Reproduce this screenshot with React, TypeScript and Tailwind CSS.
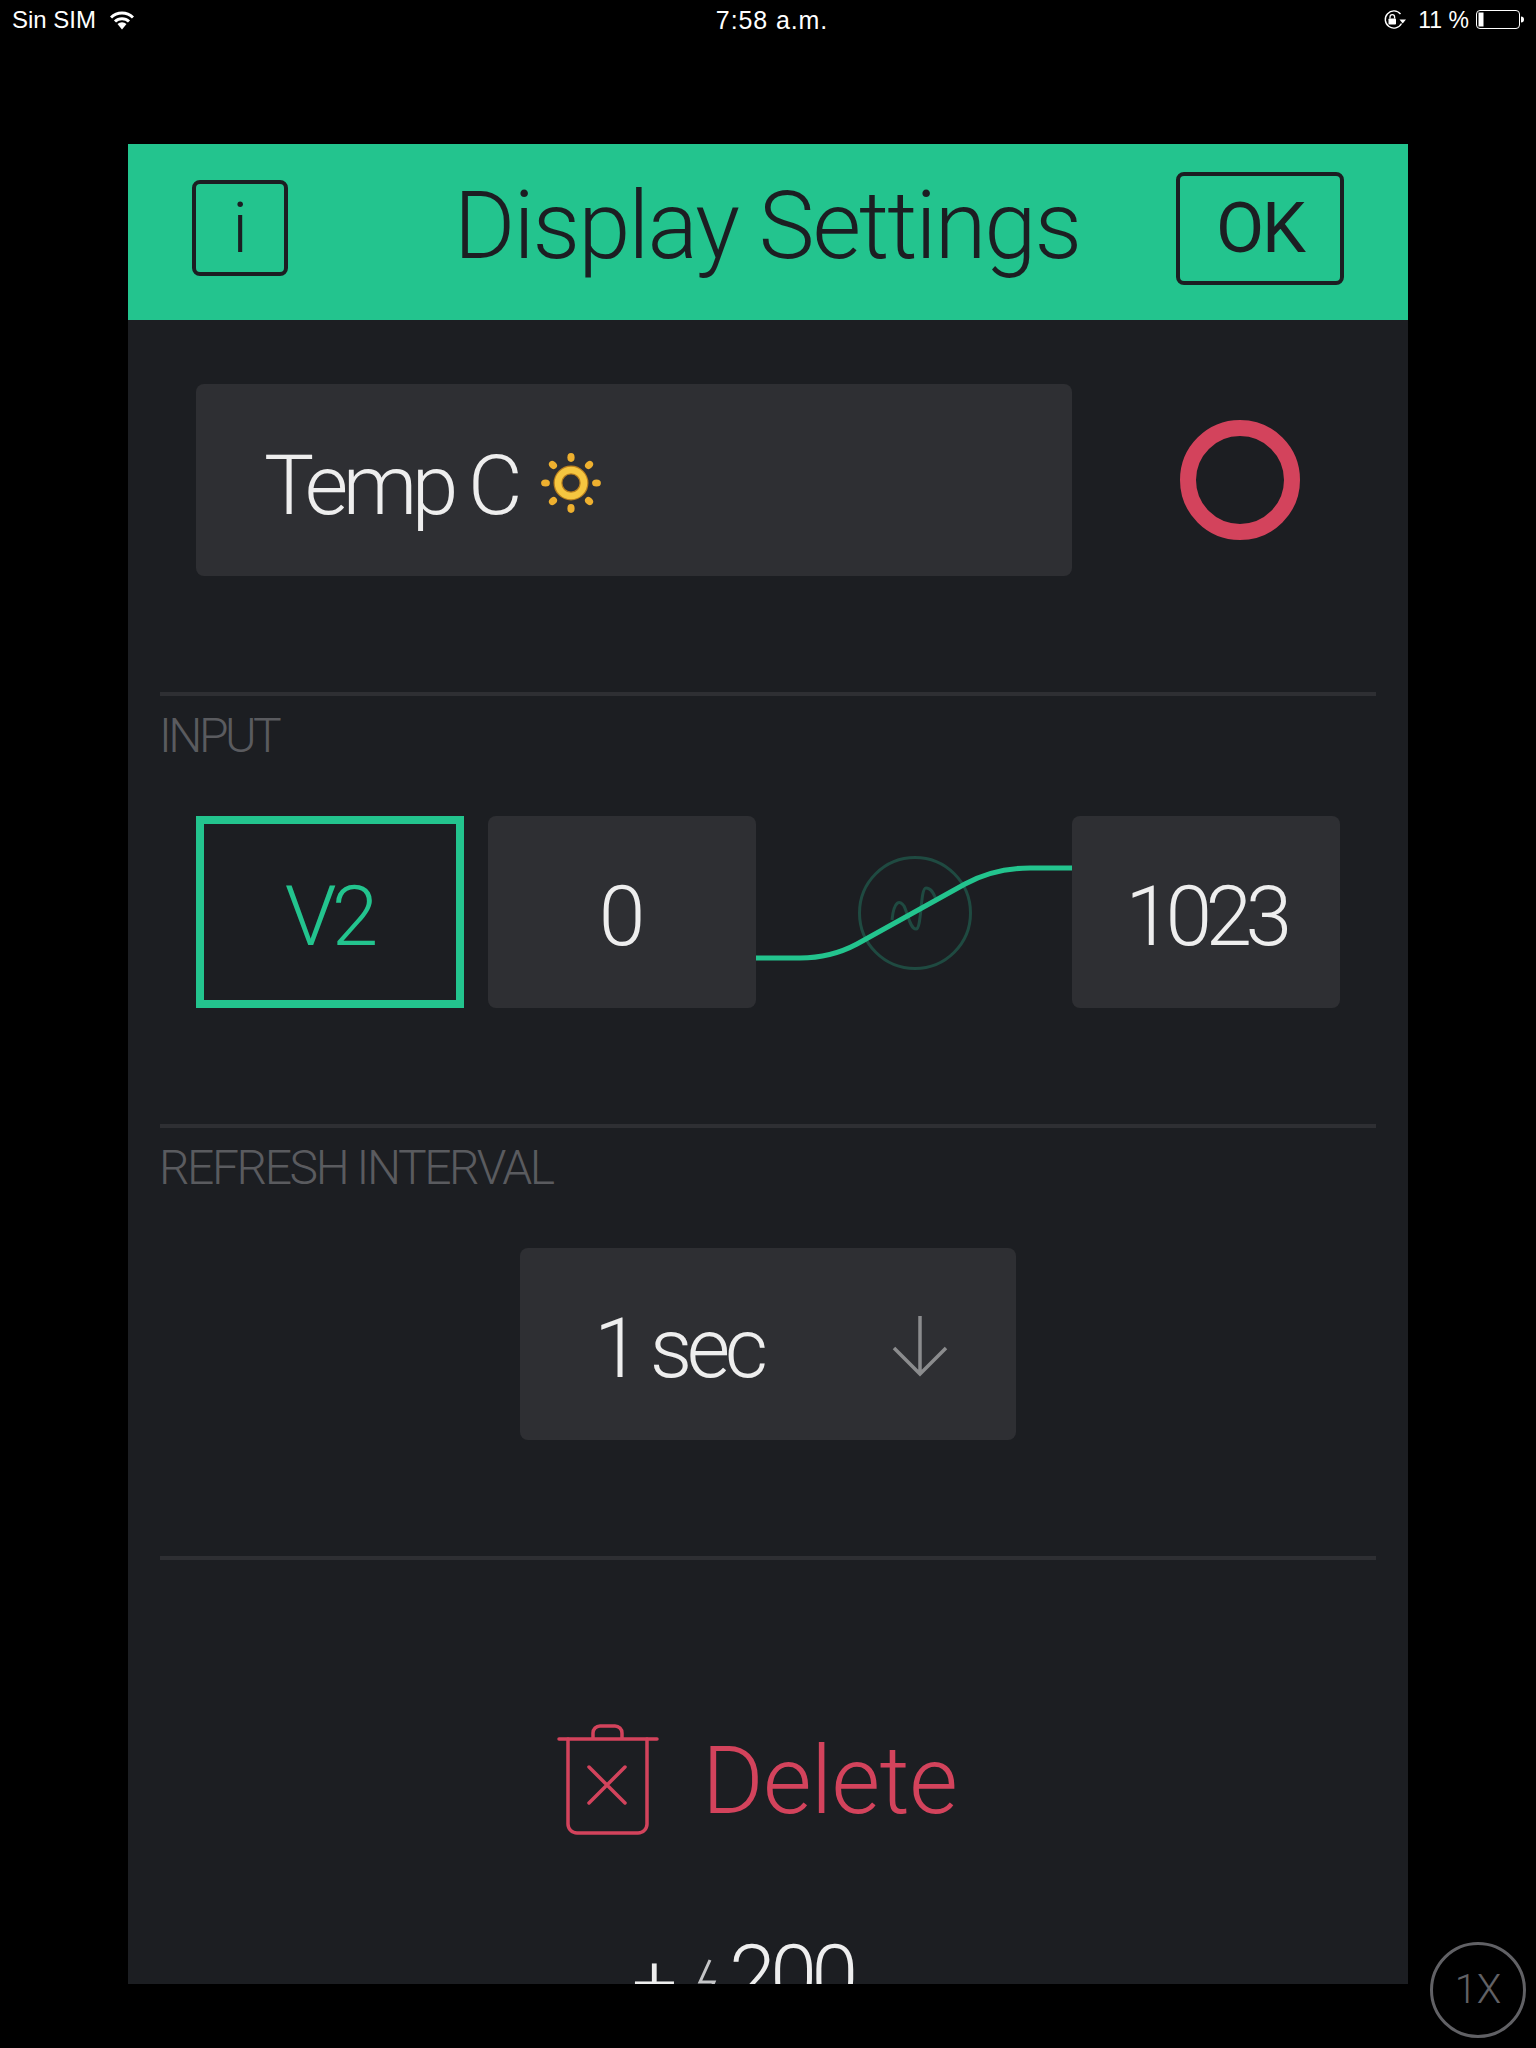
import React from "react";

const font = { fontFamily: "Roboto, 'Liberation Sans', sans-serif" };

function Wifi() {
  return (
    <svg width="24" height="19" viewBox="0 0 24 19" className="ml-[14px]">
      <path d="M1 6.5 A15.5 15.5 0 0 1 23 6.5" fill="none" stroke="#fff" strokeWidth="3" />
      <path d="M5 10.5 A10 10 0 0 1 19 10.5" fill="none" stroke="#fff" strokeWidth="3" />
      <path d="M7.5 13 A6.5 6.5 0 0 1 16.5 13 L12 18.5 Z" fill="#fff" />
    </svg>
  );
}

function RotationLock() {
  return (
    <svg width="25" height="20" viewBox="0 0 25 20">
      <path d="M19.5 13.5 A8.6 8.6 0 1 1 18.5 4" fill="none" stroke="#fff" strokeWidth="1.4" />
      <path d="M17.5 9.5 H24 L20.7 13.5 Z" fill="#fff" />
      <rect x="6.5" y="8.5" width="7.5" height="6" rx="0.8" fill="#fff" />
      <path d="M8 8.5 V7 A2.3 2.3 0 0 1 12.6 7 V8.5" fill="none" stroke="#fff" strokeWidth="1.3" />
    </svg>
  );
}

function Battery() {
  return (
    <svg width="48" height="20" viewBox="0 0 48 20">
      <rect x="0.5" y="0.5" width="43" height="18" rx="3.5" fill="none" stroke="#fff" strokeWidth="1" />
      <rect x="2.5" y="2.5" width="5" height="14" fill="#fff" />
      <path d="M45 6.5 A3 3 0 0 1 45 12.5 Z" fill="#fff" />
    </svg>
  );
}

function Sun() {
  const rays = [0, 45, 90, 135, 180, 225, 270, 315];
  return (
    <svg width="60" height="60" viewBox="0 0 60 60" className="block">
      <circle cx="30" cy="30" r="13" fill="none" stroke="#b97f1e" strokeWidth="9" />
      <circle cx="30" cy="30" r="13" fill="none" stroke="#f6c640" strokeWidth="6.5" />
      {rays.map((r) => (
        <ellipse key={r} cx="30" cy="4.5" rx="3.6" ry="4.4" fill="#eeb02f" transform={`rotate(${r} 30 30)`} />
      ))}
    </svg>
  );
}

function Curve() {
  return (
    <svg width="316" height="192" viewBox="0 0 316 192" className="block">
      <g transform="translate(-756 -816)">
        <circle cx="915" cy="913" r="55.5" fill="none" stroke="#1f4a41" strokeWidth="3" />
        <path
          d="M892 920 C894 900 900 900 904 906 C908 914 910 929 916 929 C922 929 920 888 926 888 C932 888 934 895 936 899"
          fill="none"
          stroke="#1f4a41"
          strokeWidth="3"
        />
        <path
          d="M756 958 H800 C825 958 842 952 857 944 L965 884 C985 873 1005 868 1030 868 H1072"
          fill="none"
          stroke="#23c48e"
          strokeWidth="5"
        />
      </g>
    </svg>
  );
}

function Trash() {
  return (
    <svg width="102" height="114" viewBox="0 0 102 114" className="block">
      <g fill="none" stroke="#d3435c" strokeWidth="3.5" strokeLinecap="round" strokeLinejoin="round">
        <path d="M2 15 H100" />
        <path d="M11 15 V100 A9 9 0 0 0 20 109 H81 A9 9 0 0 0 90 100 V15" />
        <path d="M36 14 V9 A7 7 0 0 1 43 2 H58 A7 7 0 0 1 65 9 V14" />
        <path d="M32 43 L68 79 M68 43 L32 79" />
      </g>
    </svg>
  );
}

function Bolt() {
  return (
    <svg width="20" height="44" viewBox="0 0 20 44" className="block">
      <path d="M13 2 L3 24 H17 L9 43" fill="none" stroke="#c4c5c7" strokeWidth="3" />
    </svg>
  );
}

function Divider() {
  return <div className="mx-[32px] h-[4px] bg-[#2e2f33]" />;
}

function ValueBox({ children, tracking }: { children: React.ReactNode; tracking: string }) {
  return (
    <div
      className={`flex h-[192px] w-[268px] items-center justify-center rounded-[8px] bg-[#2e2f33] pt-[10px] text-[84px] font-light leading-none text-[#eeeeee] ${tracking}`}
    >
      {children}
    </div>
  );
}

export default function App() {
  return (
    <div className="relative h-[2048px] w-[1536px] overflow-hidden bg-black" style={font}>
      <div
        className="grid h-[40px] grid-cols-[1fr_auto_1fr] items-center px-[12px] text-[24px] leading-none text-white"
        style={{ fontFamily: "'Liberation Sans', sans-serif" }}
      >
        <div className="flex items-center">
          <span>Sin SIM</span>
          <Wifi />
        </div>
        <span className="pl-[8px] text-[25px] tracking-[0.9px]">7:58 a.m.</span>
        <div className="flex items-center justify-end gap-[11px]">
          <RotationLock />
          <div className="flex items-center gap-[7px]">
            <span className="text-[23px]">11 %</span>
            <Battery />
          </div>
        </div>
      </div>

      <div className="ml-[128px] mt-[104px] h-[1840px] w-[1280px] overflow-hidden bg-[#1c1e22]">
        <div className="grid h-[176px] grid-cols-[1fr_auto_1fr] items-center bg-[#23c48e] px-[64px] pb-[8px] text-[#1c1e22]">
          <div className="flex h-[96px] w-[96px] items-center justify-center rounded-[8px] border-[4px] border-[#1c1e22] text-[70px] font-light leading-none">
            i
          </div>
          <div className="pb-[4px] pr-[2px] text-[94px] font-light leading-none tracking-[-2px]">Display Settings</div>
          <div className="flex h-[113px] w-[168px] items-center justify-center justify-self-end rounded-[8px] border-[4px] border-[#1c1e22] text-[70px] font-normal leading-none tracking-[-2px]">
            OK
          </div>
        </div>

        <div className="mt-[64px] flex items-center pl-[68px]">
          <div className="flex h-[192px] w-[876px] items-center rounded-[8px] bg-[#2e2f33] pl-[68px] text-[84px] font-light leading-none tracking-[-5.4px] text-[#eeeeee]">
            <span className="pt-[12px]">Temp C</span>
            <span className="ml-[24px] pt-[6px]">
              <Sun />
            </span>
          </div>
          <div className="ml-[108px] h-[120px] w-[120px] rounded-full border-[16px] border-[#d3435c]" />
        </div>

        <div className="mt-[116px]">
          <Divider />
          <div className="h-[120px] pl-[31px] pt-[16px] text-[48px] font-light leading-[48px] tracking-[-3.5px] text-[#5a5b5f]">
            INPUT
          </div>
          <div className="flex pl-[68px]">
            <div className="flex h-[192px] w-[268px] items-center justify-center border-[8px] border-[#23c48e] pr-[2px] pt-[10px] text-[84px] font-light leading-none tracking-[-5px] text-[#23c48e]">
              V2
            </div>
            <div className="ml-[24px]">
              <ValueBox tracking="pr-[3px] tracking-[-3px]">0</ValueBox>
            </div>
            <Curve />
            <ValueBox tracking="pr-[1px] tracking-[-6.5px]">1023</ValueBox>
          </div>
        </div>

        <div className="mt-[116px]">
          <Divider />
          <div className="h-[120px] pl-[31px] pt-[16px] text-[48px] font-light leading-[48px] tracking-[-2.4px] text-[#5a5b5f]">
            REFRESH INTERVAL
          </div>
          <div className="ml-[392px] flex h-[192px] w-[496px] items-center justify-between rounded-[8px] bg-[#2e2f33] pl-[74px] pr-[68px] text-[84px] font-light leading-none tracking-[-5.6px] text-[#eeeeee]">
            <span className="pt-[10px]">1 sec</span>
            <svg width="56" height="64" viewBox="0 0 56 64" className="mt-[4px] block">
              <path d="M28 2 V60 M2 34 L28 60 L54 34" fill="none" stroke="#8b8c8e" strokeWidth="3.5" />
            </svg>
          </div>
        </div>

        <div className="mt-[116px]">
          <Divider />
        </div>

        <div className="mt-[164px] flex items-center pl-[429px] text-[#d3435c]">
          <Trash />
          <span className="ml-[43px] text-[94px] font-light leading-none tracking-[-0.6px]">Delete</span>
        </div>

        <div className="mt-[98px] flex items-start pl-[504px] font-light leading-none text-[#eeeeee]">
          <span className="mt-[8px] text-[80px]">+</span>
          <span className="ml-[20px] mt-[22px]">
            <Bolt />
          </span>
          <span className="ml-[12px] mt-[-2px] text-[84px] tracking-[-5.5px]">200</span>
        </div>
      </div>

      <div className="absolute left-[1430px] top-[1942px] flex h-[96px] w-[96px] items-center justify-center rounded-full border-[3px] border-[#616165] text-[40px] font-light leading-none text-[#616165]">
        1X
      </div>
    </div>
  );
}
